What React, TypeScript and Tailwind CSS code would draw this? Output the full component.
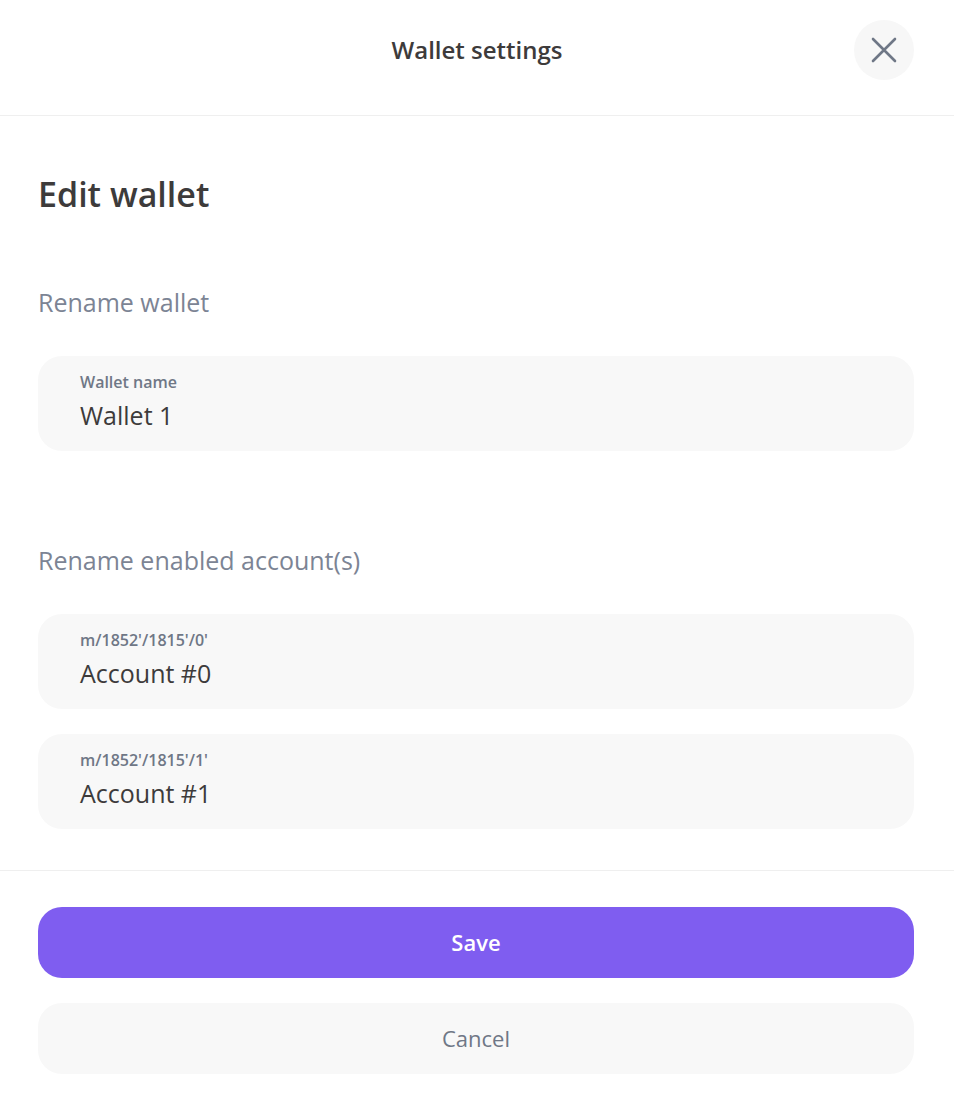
import React from "react";

const font = { fontFamily: "'Open Sans', 'Noto Sans', sans-serif" };

function Field({ label, value }: { label: string; value: string }) {
  return (
    <div className="h-[95px] w-full rounded-[24px] bg-[#f8f8f8] pl-[42px] pt-[15px] flex flex-col">
      <span className="text-[16px] leading-[22px] font-semibold text-[#6f7786]">{label}</span>
      <span className="mt-[6px] text-[25px] leading-[32px] text-[#3d3b3b]">{value}</span>
    </div>
  );
}

export default function App() {
  return (
    <div className="w-[954px] h-[1093px] bg-white flex flex-col" style={font}>
      <header className="relative h-[116px] border-b border-[#efefef] flex justify-center shrink-0">
        <h1 className="mt-[34px] text-[24px] leading-[32px] font-semibold text-[#3d3b3b]">Wallet settings</h1>
        <button className="absolute right-[40px] top-[20px] w-[60px] h-[60px] rounded-full bg-[#f7f7f7] flex items-center justify-center">
          <svg width="26" height="26" viewBox="0 0 26 26" fill="none">
            <path d="M2 2L24 24M24 2L2 24" stroke="#6f7786" strokeWidth="2.6" strokeLinecap="round" />
          </svg>
        </button>
      </header>
      <main className="pl-[38px] pr-[40px] pt-[56px] flex-1">
        <h2 className="text-[34px] leading-[44px] font-semibold text-[#3d3b3b]">Edit wallet</h2>
        <p className="mt-[70px] text-[25px] leading-[32px] text-[#7c8494]">Rename wallet</p>
        <div className="mt-[38px]">
          <Field label="Wallet name" value="Wallet 1" />
        </div>
        <p className="mt-[93px] text-[25px] leading-[32px] text-[#7c8494]">Rename enabled account(s)</p>
        <div className="mt-[38px] flex flex-col gap-[25px]">
          <Field label="m/1852'/1815'/0'" value="Account #0" />
          <Field label="m/1852'/1815'/1'" value="Account #1" />
        </div>
      </main>
      <footer className="border-t border-[#efefef] pl-[38px] pr-[40px] pt-[36px] pb-[19px] flex flex-col gap-[25px] shrink-0">
        <button className="h-[71px] w-full rounded-[24px] bg-[#7f5df0] text-white text-[22px] font-semibold">Save</button>
        <button className="h-[71px] w-full rounded-[24px] bg-[#f8f8f8] text-[#6f7786] text-[22px] font-medium">Cancel</button>
      </footer>
    </div>
  );
}
